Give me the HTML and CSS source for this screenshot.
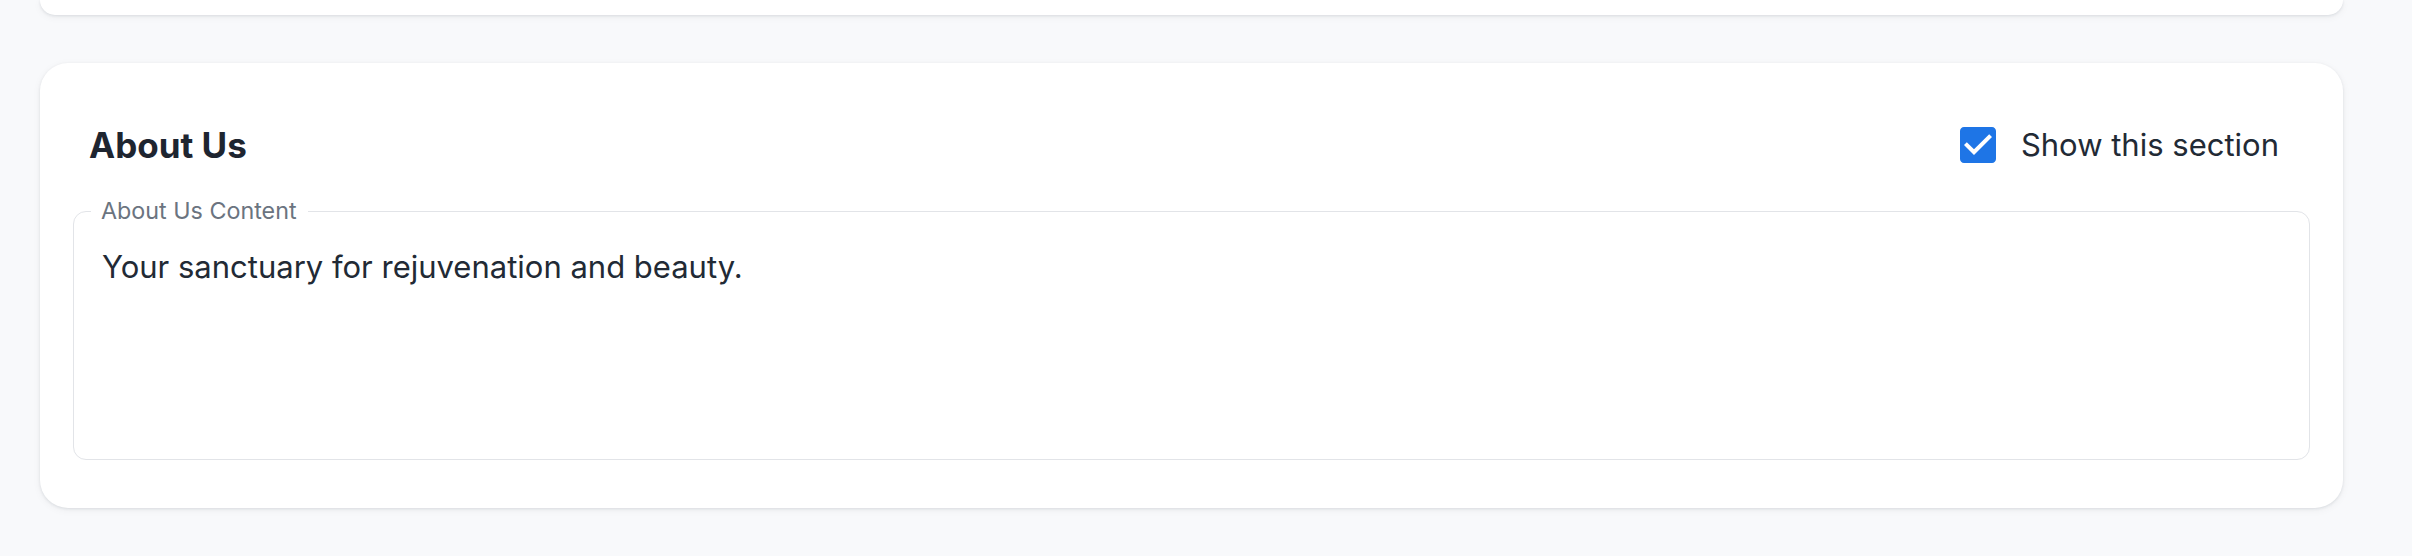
FILE: index.html
```html
<!DOCTYPE html>
<html lang="en">
<head>
<meta charset="utf-8">
<title>About Us</title>
<link rel="stylesheet" href="styles.css">
</head>
<body>
<main class="page">
  <div class="card card-tail"></div>
  <section class="card">
    <header class="card-header">
      <h2 class="card-title">About Us</h2>
      <label class="toggle">
        <span class="checkbox" aria-hidden="true">
          <svg viewBox="3 3 18 18" width="36" height="36">
            <path fill="#1e75e6" d="M19 3H5c-1.11 0-2 .9-2 2v14c0 1.1.89 2 2 2h14c1.11 0 2-.9 2-2V5c0-1.1-.89-2-2-2zm-9 14l-5-5 1.41-1.41L10 14.17l7.59-7.59L19 8l-9 9z"/>
          </svg>
        </span>
        <span class="toggle-text">Show this section</span>
      </label>
    </header>
    <fieldset class="field">
      <legend class="field-label">About Us Content</legend>
      <textarea class="field-input" rows="4">Your sanctuary for rejuvenation and beauty.</textarea>
    </fieldset>
  </section>
</main>
</body>
</html>
```

FILE: styles.css
```css
* { box-sizing: border-box; }

html, body {
  margin: 0;
  background: #f8f9fb;
}

body {
  font-family: Inter, "Noto Sans", sans-serif;
  color: #222a35;
  overflow: hidden;
}

.page {
  display: flex;
  flex-direction: column;
  gap: 48px;
  padding: 0 69px 48px 40px;
}

.card {
  background: #ffffff;
  border-radius: 28px;
  box-shadow: 0 1px 3px rgba(20, 30, 45, 0.10), 0 2px 8px rgba(20, 30, 45, 0.05);
  padding: 48px 33px 48px 33px;
}

.card-tail {
  height: 15px;
  padding: 0;
  border-radius: 0 0 28px 28px;
}

.card-header {
  display: flex;
  align-items: center;
  justify-content: space-between;
  height: 68px;
  padding: 0 31px 0 16px;
  margin-bottom: 18px;
}

.card-title {
  margin: 0;
  font-size: 35px;
  line-height: 44px;
  font-weight: 700;
  color: #1e2530;
}

.toggle {
  display: flex;
  align-items: center;
  gap: 25px;
}

.checkbox {
  display: flex;
  width: 36px;
  height: 36px;
}

.toggle-text {
  font-size: 31px;
  line-height: 44px;
  color: #222a35;
}

.field {
  margin: 0;
  padding: 0 28px 38px 28px;
  border: 1px solid #e2e4e8;
  border-radius: 13px;
  min-width: 0;
}

.field-label {
  margin-left: -11px;
  padding: 0 11px 0 10px;
  font-size: 23.3px;
  line-height: 28px;
  color: #6b7480;
}

.field-input {
  display: block;
  width: 100%;
  height: 176px;
  margin: 20px 0 0 0;
  padding: 0;
  border: 0;
  outline: none;
  resize: none;
  background: transparent;
  font-family: inherit;
  font-size: 31px;
  line-height: 44px;
  color: #222a35;
}
```
